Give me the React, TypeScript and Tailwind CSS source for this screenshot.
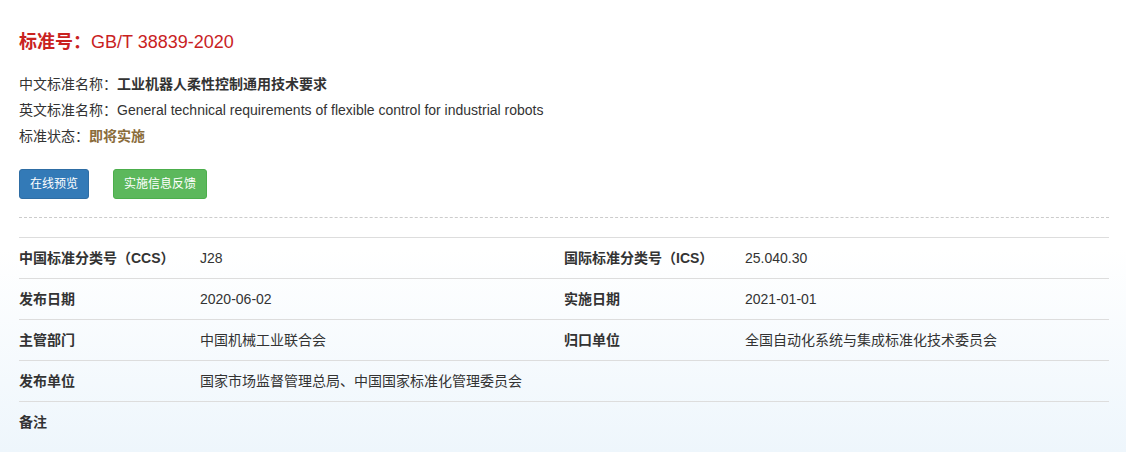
import React from "react";

const rows: [string, string, string, string][] = [
  ["中国标准分类号（CCS）", "J28", "国际标准分类号（ICS）", "25.040.30"],
  ["发布日期", "2020-06-02", "实施日期", "2021-01-01"],
  ["主管部门", "中国机械工业联合会", "归口单位", "全国自动化系统与集成标准化技术委员会"],
  ["发布单位", "国家市场监督管理总局、中国国家标准化管理委员会", "", ""],
  ["备注", "", "", ""],
];

export default function App() {
  return (
    <div
      className="w-[1126px] h-[452px] overflow-hidden bg-[linear-gradient(to_bottom,#ffffff_0%,#ffffff_55%,#eef6fc_100%)] pl-[19px] pr-[17px] pt-[30px] text-[#333] text-[14px]"
      style={{ fontFamily: '"Liberation Sans", "Noto Sans CJK SC", sans-serif' }}
    >
      <h1 className="text-[18px] leading-[24px] text-[#c9221f]">
        <span className="font-bold">标准号：</span>GB/T 38839-2020
      </h1>
      <div className="mt-[17px] flex flex-col">
        <p className="leading-[26px]">
          中文标准名称：<span className="font-bold">工业机器人柔性控制通用技术要求</span>
        </p>
        <p className="leading-[26px]">
          英文标准名称：General technical requirements of flexible control for industrial robots
        </p>
        <p className="leading-[26px]">
          标准状态：<span className="font-bold text-[#8a6d3b]">即将实施</span>
        </p>
      </div>
      <div className="mt-[20px] flex gap-[24px]">
        <button className="h-[30px] px-[10px] rounded-[3px] bg-[#337ab7] border border-[#2e6da4] text-white text-[12px]">
          在线预览
        </button>
        <button className="h-[30px] px-[10px] rounded-[3px] bg-[#5cb85c] border border-[#4cae4c] text-white text-[12px]">
          实施信息反馈
        </button>
      </div>
      <div className="mt-[18px] border-t border-dashed border-[#ccc]" />
      <table className="mt-[19px] w-full border-collapse table-fixed">
        <colgroup>
          <col className="w-[181px]" />
          <col className="w-[364px]" />
          <col className="w-[181px]" />
          <col />
        </colgroup>
        <tbody>
          {rows.map((r, i) => (
            <tr key={i} className="border-t border-[#ddd]">
              <td className="h-[41px] font-bold align-middle">{r[0]}</td>
              <td className="align-middle">{r[1]}</td>
              <td className="font-bold align-middle">{r[2]}</td>
              <td className="align-middle">{r[3]}</td>
            </tr>
          ))}
        </tbody>
      </table>
    </div>
  );
}
